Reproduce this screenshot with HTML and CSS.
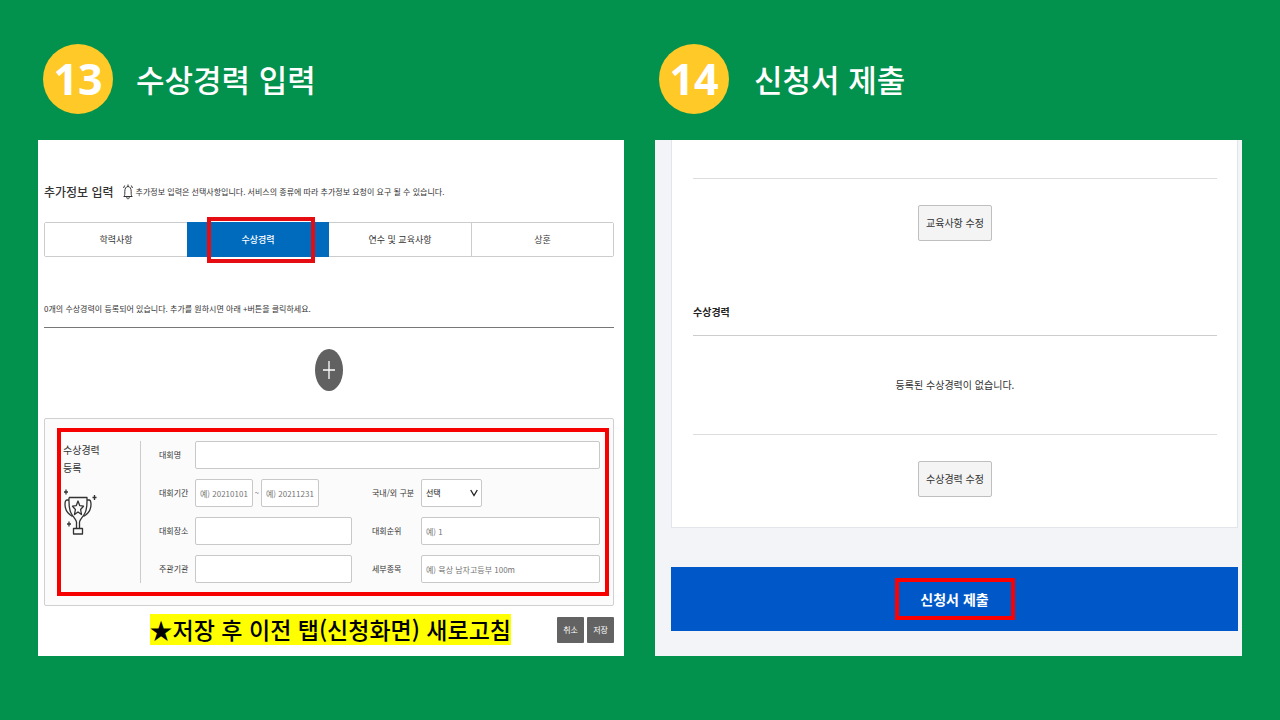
FILE: index.html
```html
<!DOCTYPE html>
<html lang="ko">
<head>
<meta charset="utf-8">
<meta name="viewport" content="width=device-width, initial-scale=1">
<title>수상경력 입력 및 신청서 제출</title>
<link rel="stylesheet" href="styles.css">
</head>
<body>
<main class="guide">
  <section class="step">
    <header class="step-head">
      <span class="step-number">13</span>
      <h1 class="step-title">수상경력 입력</h1>
    </header>
    <div class="panel panel-entry">
      <div class="entry-head">
        <h2 class="entry-title">추가정보 입력</h2>
        <svg class="bell" viewBox="0 0 10 16" fill="none" stroke="#333" stroke-width="1" aria-hidden="true">
          <path d="M5 .5v2M.8 12.500C2 11.500 1.800 10 1.800 7.500C1.800 4.500 3 2.500 5 2.500S8.200 4.500 8.200 7.500C8.200 10 8 11.500 9.200 12.500ZM3.800 13C3.800 15.600 6.200 15.600 6.200 13M1.700 1.500L.5 4M8.300 1.500L9.500 4"/>
        </svg>
        <p class="entry-hint">추가정보 입력은 선택사항입니다. 서비스의 종류에 따라 추가정보 요청이 요구 될 수 있습니다.</p>
      </div>
      <nav class="tabs">
        <button class="tab" type="button">학력사항</button>
        <button class="tab tab-active" type="button">수상경력</button>
        <button class="tab" type="button">연수 및 교육사항</button>
        <button class="tab" type="button">상훈</button>
      </nav>
      <p class="status">0개의 수상경력이 등록되어 있습니다. 추가를 원하시면 아래 +버튼을 클릭하세요.</p>
      <button class="add" type="button" aria-label="추가">
        <svg class="add-icon" viewBox="0 0 12 18" stroke="#fff" stroke-width="1.300" aria-hidden="true"><path d="M6 0V18M0 9H12"/></svg>
      </button>
      <form class="award-form">
        <div class="award-card">
          <div class="award-box">
            <div class="award-side">
              <h3 class="award-title">수상경력<br>등록</h3>
              <svg class="trophy" viewBox="0 0 34 48" fill="none" stroke="#333" stroke-width="1.300" stroke-linejoin="round" aria-hidden="true">
                <path d="M6 9.500H24C24 14 24.500 20 22 25C20 29 17 31 16.500 34V40M6 9.500C6 14 5.500 20 8 25C10 29 13 31 13.500 34V40"/>
                <path d="M6 12H4C2.500 12 2 14 2 16.500C2 23 5 26 9.500 28.500M24 12H26C27.500 12 28 14 28 16.500C28 23 25 26 20.500 28.500"/>
                <path d="M10.500 40.500H19.500V46H10.500Z"/>
                <path d="M15 13L16.700 17.600L20.500 18.200L17.600 21.500L18.500 26.500L15 24L11.500 26.500L12.400 21.500L9.500 18.200L13.300 17.600Z"/>
                <path d="M3 1.500V6.500M1 4H5M31.500 7V12M29.500 9.500H33.500M6 33.500V38.500M4 36H8"/>
              </svg>
            </div>
            <div class="fields">
              <label class="label" for="contest">대회명</label>
              <input class="input wide" id="contest" type="text">

              <label class="label" for="from">대회기간</label>
              <div class="period">
                <input class="input date" id="from" type="text" placeholder="예) 20210101">
                <span class="tilde">~</span>
                <input class="input date" id="to" type="text" placeholder="예) 20211231" aria-label="대회기간 종료">
              </div>
              <label class="label second" for="region">국내/외 구분</label>
              <div class="select-wrap">
                <select class="input select" id="region"><option>선택</option></select>
                <svg class="chevron" viewBox="0 0 8 8" fill="none" stroke="#222" stroke-width="1.300" aria-hidden="true"><path d="M.7 1L4 6.500L7.300 1"/></svg>
              </div>

              <label class="label" for="place">대회장소</label>
              <input class="input" id="place" type="text">
              <label class="label second" for="rank">대회순위</label>
              <input class="input" id="rank" type="text" placeholder="예) 1">

              <label class="label" for="host">주관기관</label>
              <input class="input" id="host" type="text">
              <label class="label second" for="event">세부종목</label>
              <input class="input" id="event" type="text" placeholder="예) 육상 남자고등부 100m">
            </div>
          </div>
        </div>
        <div class="form-foot">
          <p class="notice"><mark class="notice-mark">★저장 후 이전 탭(신청화면) 새로고침</mark></p>
          <button class="small-btn" type="button">취소</button>
          <button class="small-btn" type="button">저장</button>
        </div>
      </form>
    </div>
  </section>

  <section class="step">
    <header class="step-head step-head-right">
      <span class="step-number">14</span>
      <h1 class="step-title">신청서 제출</h1>
    </header>
    <div class="panel panel-review">
      <div class="review-card">
        <div class="edit-row"><button class="edit" type="button">교육사항 수정</button></div>
        <h2 class="review-title">수상경력</h2>
        <p class="review-empty">등록된 수상경력이 없습니다.</p>
        <div class="edit-row"><button class="edit" type="button">수상경력 수정</button></div>
      </div>
      <button class="submit" type="button"><span class="submit-box">신청서 제출</span></button>
    </div>
  </section>
</main>
</body>
</html>
```
FILE: styles.css
```css
* {
  box-sizing: border-box;
}

body {
  margin: 0;
  min-height: 100vh;
  background: #03914e;
  color: #333;
  font-family: "Noto Sans CJK KR", sans-serif;
  font-size: 8px;
  line-height: 16px;
}

h1, h2, h3, p {
  margin: 0;
}

button, input, select {
  font: inherit;
  color: inherit;
}

button {
  padding: 0;
}

.guide {
  display: grid;
  grid-template-columns: 586fr 587fr;
  gap: 31px;
  padding: 44px 38px 64px;
}

.step {
  display: flex;
  flex-direction: column;
  min-width: 0;
}

.step-head {
  display: flex;
  align-items: center;
  gap: 23px;
  padding-left: 5px;
  margin-bottom: 26px;
}

.step-head-right {
  gap: 25px;
  padding-left: 4px;
}

.step-number {
  display: flex;
  align-items: center;
  justify-content: center;
  width: 70px;
  height: 70px;
  border-radius: 50%;
  background: #ffca28;
  color: #fff;
  font-family: "Noto Sans", "Open Sans", sans-serif;
  font-size: 43px;
  font-weight: 700;
  line-height: 70px;
}

.step-title {
  color: #fff;
  font-size: 31px;
  font-weight: 500;
  line-height: 44px;
}

.panel {
  flex: 1;
  background: #fff;
}

.panel-entry {
  padding: 40px 10px 10px 6px;
}

.entry-head {
  display: flex;
  align-items: center;
  margin-bottom: 18px;
}

.entry-title {
  margin-right: 9px;
  font-size: 12px;
  font-weight: 500;
  line-height: 24px;
  white-space: nowrap;
}

.bell {
  width: 10px;
  height: 16px;
  margin-right: 3px;
}

.tabs {
  display: grid;
  grid-template-columns: repeat(4, 1fr);
  border: 1px solid #ccc;
  border-radius: 2px;
}

.tab {
  position: relative;
  height: 33px;
  border: 0;
  border-left: 1px solid #ccc;
  background: #fff;
  font-size: 9px;
}

.tab:first-child {
  border-left: 0;
}

.tab-active {
  margin: -1px 0;
  height: 35px;
  border: 0;
  background: #006bbd;
  color: #fff;
  font-weight: 500;
}

.tab-active + .tab {
  border-left: 0;
}

.tab-active::after {
  content: "";
  position: absolute;
  inset: -5px 14px -6px 20px;
  border: 4px solid #e60d12;
}

.status {
  margin-top: 44px;
  padding-bottom: 10px;
  border-bottom: 1px solid #777;
}

.add {
  display: flex;
  align-items: center;
  justify-content: center;
  width: 28px;
  height: 42px;
  margin: 21px auto 27px;
  border: 0;
  border-radius: 50%;
  background: #616161;
}

.add-icon {
  width: 12px;
  height: 18px;
}

.award-card {
  padding: 9px 4px 9px 12px;
  border: 1px solid #d0d0d0;
  border-radius: 2px;
  background: #fbfbfb;
}

.award-box {
  display: flex;
  padding: 9px 5px 9px 0;
  border: 4px solid #f60000;
}

.award-side {
  width: 80px;
  padding-left: 2px;
  border-right: 1px solid #ccc;
}

.award-title {
  font-size: 10px;
  font-weight: 400;
  line-height: 18px;
}

.trophy {
  display: block;
  width: 34px;
  height: 48px;
  margin-top: 11px;
}

.fields {
  display: grid;
  flex: 1;
  grid-template-columns: 36px 157fr 69px 179fr;
  gap: 10px 0;
  align-items: center;
  min-width: 0;
  margin-left: 18px;
}

.label {
  white-space: nowrap;
}

.second {
  padding-left: 20px;
}

.input {
  width: 100%;
  min-width: 0;
  height: 28px;
  padding: 0 4px;
  border: 1px solid #c8c8c8;
  border-radius: 2px;
  background: #fff;
}

.input::placeholder {
  color: #757575;
  opacity: 1;
}

.wide {
  grid-column: 2 / -1;
}

.period {
  display: flex;
  align-items: center;
}

.date {
  width: 58px;
}

.tilde {
  width: 8px;
  text-align: center;
}

.select-wrap {
  position: relative;
  width: 61px;
}

.select {
  appearance: none;
  color: #111;
}

.chevron {
  position: absolute;
  top: 10px;
  right: 4px;
  width: 8px;
  height: 8px;
  pointer-events: none;
}

.form-foot {
  display: flex;
  align-items: center;
  gap: 3px;
  margin-top: 8px;
}

.notice {
  flex: 1;
  padding-right: 43px;
  text-align: right;
}

.notice-mark {
  display: inline-block;
  background: #ff0;
  color: #000;
  font-size: 23px;
  font-weight: 500;
  line-height: 31px;
  white-space: nowrap;
}

.small-btn {
  width: 27px;
  height: 26px;
  border: 0;
  border-radius: 1px;
  background: #636363;
  color: #fff;
}

.panel-review {
  padding: 0 4px 25px 16px;
  background: #f2f4f8;
}

.review-card {
  padding: 38px 20px 30px 21px;
  border: 1px solid #e2e5ea;
  border-top: 0;
  background: #fff;
}

.edit-row {
  display: flex;
  justify-content: center;
  padding-top: 26px;
  border-top: 1px solid #ddd;
}

.edit {
  width: 74px;
  height: 36px;
  border: 1px solid #bfbfbf;
  border-radius: 2px;
  background: #f4f4f4;
  font-size: 10px;
}

.review-title {
  margin-top: 63px;
  padding-bottom: 15px;
  border-bottom: 1px solid #ccc;
  color: #222;
  font-size: 10px;
  font-weight: 700;
}

.review-empty {
  padding: 41px 0;
  font-size: 10px;
  text-align: center;
}

.submit {
  display: flex;
  align-items: center;
  justify-content: center;
  width: 100%;
  height: 64px;
  margin-top: 39px;
  border: 0;
  background: #0058c8;
  color: #fff;
}

.submit-box {
  width: 120px;
  border: 4px solid #f00;
  font-size: 14px;
  font-weight: 700;
  line-height: 34px;
}
```
